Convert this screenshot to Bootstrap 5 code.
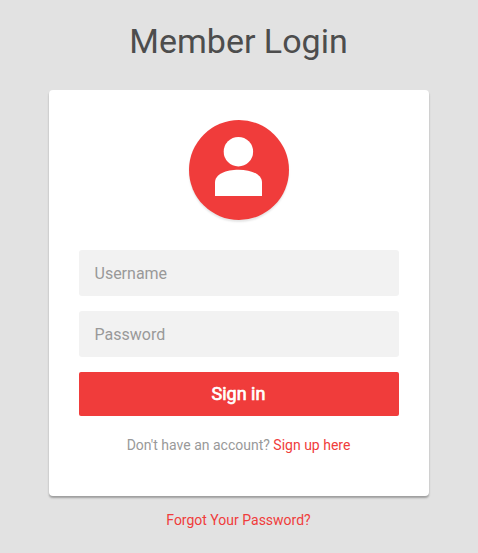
<!DOCTYPE html>
<html lang="en">
<head>
<meta charset="utf-8">
<meta name="viewport" content="width=device-width, initial-scale=1">
<title>Member Login</title>
<link href="https://cdn.jsdelivr.net/npm/bootstrap@5.3.0/dist/css/bootstrap.min.css" rel="stylesheet">
<style>
body{background:#e2e2e2;font-family:Roboto,sans-serif;font-size:14px;color:#999;min-height:553px}
.login-title{font-size:34px;line-height:40px;color:#4d4d4d;padding-top:21px;margin:0 1px 29px 0;font-weight:400}
.login-card{width:380px;height:406px;padding:30px;border-radius:4px;box-shadow:0 2px 2px rgba(0,0,0,.3)}
.avatar{width:100px;height:100px;background:#f03c3b;box-shadow:0 2px 2px rgba(0,0,0,.1);margin-bottom:30px}
.field{height:46px;background:#f2f2f2;border:0;border-radius:3px;padding:0 15.500px;font-size:16px;margin-bottom:15px}
.field::placeholder{color:#999}
.field:focus{background:#f2f2f2}
.btn-signin{height:44px;background:#f03c3b;color:#fff;border:0;border-radius:2px;font-size:18px;line-height:24px;font-weight:400;-webkit-text-stroke:.7px #fff;padding:0 1px 1px 0}
.btn-signin:hover{background:#d83434;color:#fff}
.red-link{color:#f03c3b}
.signup{margin:19px 1px 0 0;line-height:21px}
.forgot{line-height:21px;margin:14px 1px 0 0}
</style>
</head>
<body>
<main class="d-flex flex-column align-items-center">
<h1 class="login-title text-center">Member Login</h1>
<form class="login-card bg-white">
<div class="avatar rounded-circle mx-auto">
<svg class="d-block" width="100" height="100" viewBox="0 0 100 100" fill="#fff" aria-hidden="true"><circle cx="49.400" cy="31.700" r="14.700"/><path d="M26 76V62.500C26 54 37 49.700 49.500 49.700S73 54 73 62.500V76z"/></svg>
</div>
<input type="text" class="form-control field" placeholder="Username" aria-label="Username">
<input type="password" class="form-control field" placeholder="Password" aria-label="Password">
<button type="button" class="btn btn-signin w-100">Sign in</button>
<p class="signup text-center">Don't have an account? <a href="#" class="red-link text-decoration-none">Sign up here</a></p>
</form>
<a href="#" class="forgot red-link text-decoration-none">Forgot Your Password?</a>
</main>
<script src="https://cdn.jsdelivr.net/npm/bootstrap@5.3.0/dist/js/bootstrap.bundle.min.js"></script>
</body>
</html>
